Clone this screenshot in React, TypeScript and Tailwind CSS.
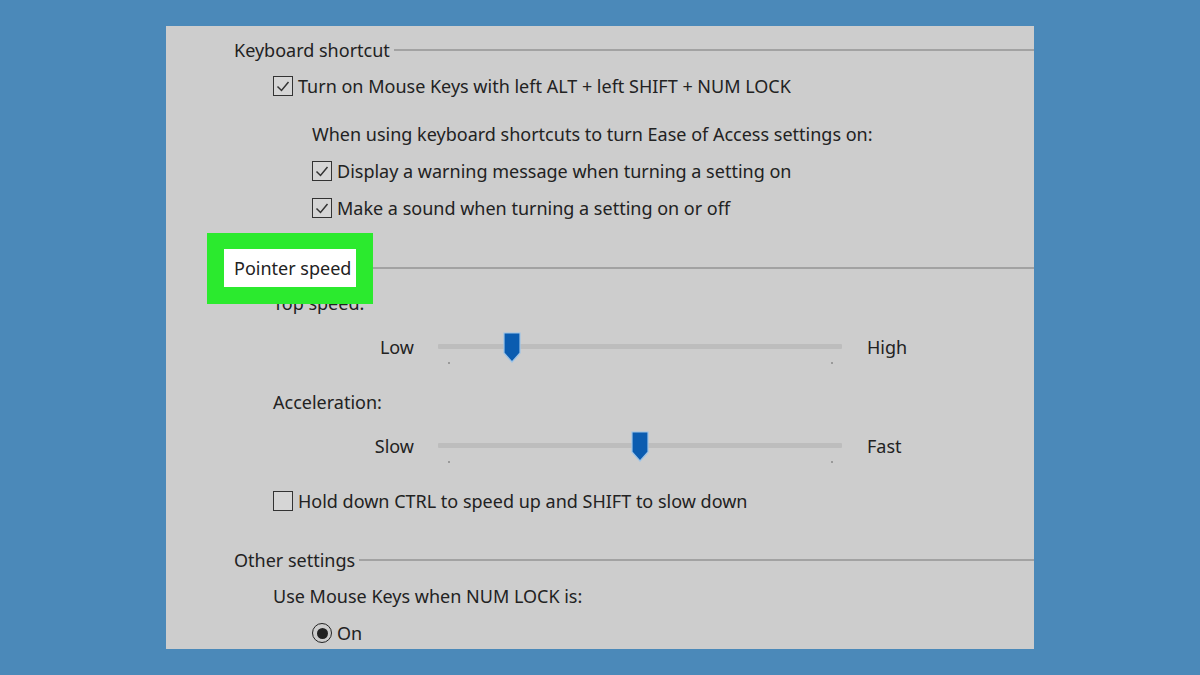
import React from 'react';

const font = { fontFamily: '"Noto Sans", "Open Sans", sans-serif' };

function Check({ checked }: { checked: boolean }) {
  return (
    <div className="w-[20px] h-[20px] border-[1.5px] border-[#333] bg-[#d6d6d6] flex items-center justify-center shrink-0">
      {checked && (
        <svg width="16" height="16" viewBox="0 0 16 16">
          <path d="M2.5 8.5 L6.5 12.5 L13.5 4" fill="none" stroke="#333" strokeWidth="1.5" />
        </svg>
      )}
    </div>
  );
}

function Header({ label, className = '' }: { label: string; className?: string }) {
  return (
    <div className={`flex items-center h-[24px] pl-[68px] ${className}`}>
      <span className="pr-[4px]">{label}</span>
      <div className="flex-1 h-[2px] bg-[#a2a2a2]" />
    </div>
  );
}

function Slider({ left, right, pos }: { left: string; right: string; pos: number }) {
  return (
    <div className="flex items-center h-[32px] mt-[16px]">
      <div className="w-[272px] text-right pr-[24px]">{left}</div>
      <div className="relative w-[404px] h-[32px]">
        <div className="absolute left-0 right-0 top-[13px] h-[5px] bg-[#bdbdbd] rounded-[1px]" />
        <div className="absolute left-[10px] top-[31px] w-[2px] h-[2px] bg-[#9a9a9a]" />
        <div className="absolute left-[393px] top-[31px] w-[2px] h-[2px] bg-[#9a9a9a]" />
        <svg
          className="absolute top-[1px]"
          style={{ left: pos - 9 }}
          width="18"
          height="31"
          viewBox="0 0 18 31"
        >
          <path d="M1 1 H17 V21 L9 30 L1 21 Z" fill="#0b5cb0" stroke="#9cc3e8" strokeWidth="1.2" />
        </svg>
      </div>
      <div className="pl-[25px]">{right}</div>
    </div>
  );
}

export default function App() {
  return (
    <div className="w-[1200px] h-[675px] bg-[#4b89b9] pt-[26px] pl-[166px]" style={font}>
      <div className="w-[868px] h-[623px] bg-[#cdcdcd] text-[18px] text-[#222] pt-[12px] overflow-hidden">
        <Header label="Keyboard shortcut" />

        <div className="flex items-center h-[24px] mt-[12px] pl-[107px] gap-[5px]">
          <Check checked />
          <span>Turn on Mouse Keys with left ALT + left SHIFT + NUM LOCK</span>
        </div>

        <div className="flex items-center h-[24px] mt-[24px] pl-[146px]">
          When using keyboard shortcuts to turn Ease of Access settings on:
        </div>
        <div className="flex items-center h-[24px] mt-[13px] pl-[146px] gap-[5px]">
          <Check checked />
          <span>Display a warning message when turning a setting on</span>
        </div>
        <div className="flex items-center h-[24px] mt-[13px] pl-[146px] gap-[5px]">
          <Check checked />
          <span>Make a sound when turning a setting on or off</span>
        </div>

        {/* highlighted section header */}
        <div className="relative flex items-center h-[24px] mt-[36px]">
          <div className="absolute left-[41px] top-[-23px] w-[166px] h-[71px] bg-[#2bea2e] z-10" />
          <div className="absolute left-[58px] top-[-7px] w-[132px] h-[38px] bg-white z-10" />
          <span className="relative z-20 pl-[68px] w-[190px]">Pointer speed</span>
          <div className="flex-1 h-[2px] bg-[#a2a2a2]" />
        </div>

        <div className="flex items-center h-[24px] mt-[11px] pl-[107px]">Top speed:</div>
        <Slider left="Low" right="High" pos={74} />

        <div className="flex items-center h-[24px] mt-[27px] pl-[107px]">Acceleration:</div>
        <Slider left="Slow" right="Fast" pos={202} />

        <div className="flex items-center h-[24px] mt-[27px] pl-[107px] gap-[5px]">
          <Check checked={false} />
          <span>Hold down CTRL to speed up and SHIFT to slow down</span>
        </div>

        <Header label="Other settings" className="mt-[35px]" />

        <div className="flex items-center h-[24px] mt-[12px] pl-[107px]">
          Use Mouse Keys when NUM LOCK is:
        </div>
        <div className="flex items-center h-[24px] mt-[13px] pl-[146px] gap-[5px]">
          <div className="w-[20px] h-[20px] rounded-full border-[1.5px] border-[#222] flex items-center justify-center">
            <div className="w-[11px] h-[11px] rounded-full bg-[#222]" />
          </div>
          <span>On</span>
        </div>
      </div>
    </div>
  );
}
